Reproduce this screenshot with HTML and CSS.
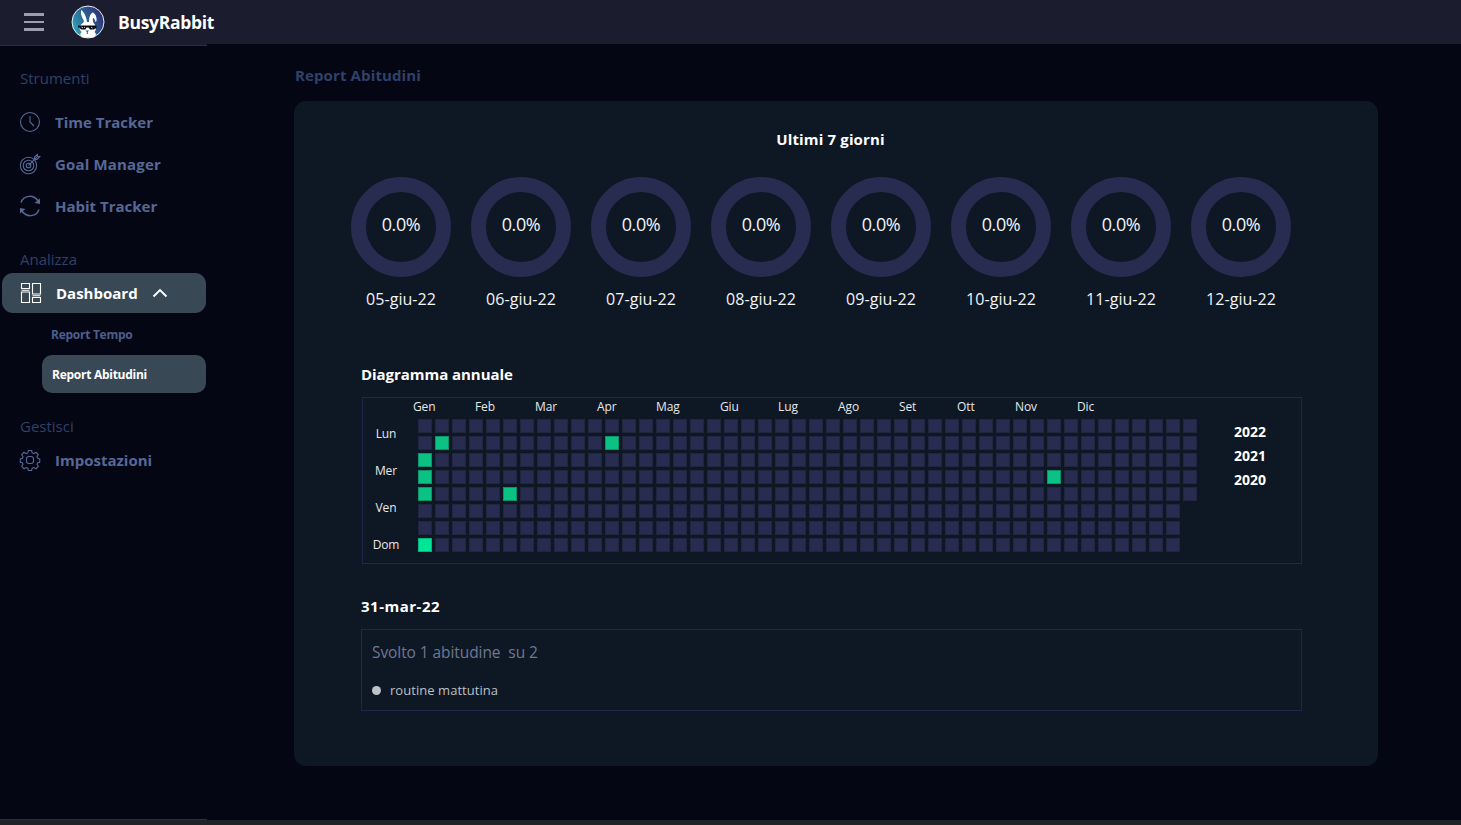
FILE: index.html
```html
<!DOCTYPE html>
<html lang="it">
<head>
<meta charset="utf-8">
<title>BusyRabbit</title>
<link rel="stylesheet" href="styles.css">
</head>
<body>
<header class="topbar">
  <div class="burger"><i></i><i></i><i></i></div>
  <svg class="logo" viewBox="0 0 34 34">
    <defs><linearGradient id="lg" x1="0" y1=".8" x2="1" y2=".3"><stop offset="0" stop-color="#2bacbf"/><stop offset=".5" stop-color="#2b6494"/><stop offset="1" stop-color="#302b74"/></linearGradient></defs>
    <circle cx="17" cy="17" r="16" fill="url(#lg)" stroke="#fff" stroke-width=".9"/>
    <path fill="#fff" d="M10 5C12 5.500 15.500 11 16 17L18 17C18 12 19.500 8 22 7.500C24.500 9 26 12 25.500 16L24.500 17C24 15 23 12.500 22 13C21.500 14.500 22 16 22.500 18C25.500 20.500 25.500 25 23.500 27C26 29 25 31.500 22 32.500L12 32.500C9 31 8.500 29 10.500 27C7.500 24 8.500 20 12 18C13 17 13 16 12.500 15C10.500 12 9.500 8 10 5Z"/>
    <path fill="#080a12" d="M7 20.500H25.500V23.500H24L23 24.500H19L17.500 22.500H15.500L14.500 24.500H10L8.500 22.500H7Z"/>
    <path stroke="#fff" stroke-width=".8" d="M10.500 22l1.500 1M13 22l1 .8M20 22l1.500 1"/>
    <path fill="#2b6494" d="M14.500 25.500h3.500l-1.200 1.500v2h-1v-2z"/>
  </svg>
  <span class="brand">BusyRabbit</span>
</header>
<div class="shell">
  <nav class="sidebar">
    <div class="group">Strumenti</div>
    <a class="item"><svg viewBox="0 0 22 22"><circle cx="11" cy="11" r="9.500"/><path d="M11 5v6l4 4"/></svg><span>Time Tracker</span></a>
    <a class="item goal"><svg viewBox="0 0 22 22"><circle cx="9.500" cy="12.500" r="8.200"/><circle cx="9.500" cy="12.500" r="5.300"/><circle cx="9.500" cy="12.500" r="2.300"/><path d="M9.500 12.500L18 4M15.500 6.500V4L18.500 1.500V3.500H20.800L18 6.500H15.500"/></svg><span>Goal Manager</span></a>
    <a class="item"><svg viewBox="0 0 22 22"><path d="M2 7.500C5 -.5 15 -.5 19.500 6.500M20 14.500C17 22.500 7 22.500 2.500 15.500" stroke-width="1.500"/><path class="solid" d="M21 3.500V9L15.500 8zM1 18.500V13L6.500 14z"/></svg><span>Habit Tracker</span></a>
    <div class="group analyze">Analizza</div>
    <a class="item open"><svg viewBox="0 0 22 22"><path d="M1.500 1.500h8v5h-8zM12.500 1.500h8v10.500h-8zM1.500 10h8v10.500h-8zM12.500 15.500h8v5h-8zM1.500 8.200h8M12.500 13.700h8"/></svg><span>Dashboard</span><svg class="chevron" viewBox="0 0 16 10"><path d="M1.500 8.500L8 2l6.500 6.500"/></svg></a>
    <a class="sub">Report Tempo</a>
    <a class="sub current">Report Abitudini</a>
    <div class="group manage">Gestisci</div>
    <a class="item settings"><svg viewBox="0 0 22 22"><rect x="7.500" y="7.500" width="7" height="7" rx="2.500"/><path d="M9.400 1.500h3.200l.6 2.400 1.600.7 2.200-1.300 2.300 2.300-1.300 2.200.7 1.600 2 .5v3.300l-2 .5-.7 1.600 1.300 2.200-2.300 2.200-2.200-1.200-1.600.7-.6 2.300H9.400l-.6-2.300-1.600-.7-2.200 1.200-2.300-2.200L4 15.300l-.7-1.600-2-.5V9.900l2-.5.7-1.600-1.300-2.200L5 3.300l2.200 1.300 1.600-.7z"/></svg><span>Impostazioni</span></a>
  </nav>
  <main class="content">
    <h1>Report Abitudini</h1>
    <section class="card">
      <h2 class="week-title">Ultimi 7 giorni</h2>
      <div class="rings">
        <div class="day"><div class="ring">0.0%</div><span>05-giu-22</span></div>
        <div class="day"><div class="ring">0.0%</div><span>06-giu-22</span></div>
        <div class="day"><div class="ring">0.0%</div><span>07-giu-22</span></div>
        <div class="day"><div class="ring">0.0%</div><span>08-giu-22</span></div>
        <div class="day"><div class="ring">0.0%</div><span>09-giu-22</span></div>
        <div class="day"><div class="ring">0.0%</div><span>10-giu-22</span></div>
        <div class="day"><div class="ring">0.0%</div><span>11-giu-22</span></div>
        <div class="day"><div class="ring">0.0%</div><span>12-giu-22</span></div>
      </div>
      <h2 class="year-title">Diagramma annuale</h2>
      <div class="year">
        <div class="weekdays"><span>Lun</span><span>Mer</span><span>Ven</span><span>Dom</span></div>
        <div class="chart">
          <div class="months"><span>Gen</span><span>Feb</span><span>Mar</span><span>Apr</span><span>Mag</span><span>Giu</span><span>Lug</span><span>Ago</span><span>Set</span><span>Ott</span><span>Nov</span><span>Dic</span></div>
          <div class="cells" id="cells"></div>
        </div>
        <div class="years"><b>2022</b><b>2021</b><b>2020</b></div>
      </div>
      <h2 class="date-title">31-mar-22</h2>
      <div class="detail">
        <p class="summary">Svolto 1 abitudine&nbsp; su 2</p>
        <p class="habit"><i></i>routine mattutina</p>
      </div>
    </section>
  </main>
</div>
<footer class="bottom"></footer>
<script src="cells.js"></script>
</body>
</html>
```
FILE: styles.css
```css
* { box-sizing: border-box; }
body { margin: 0; height: 825px; overflow: hidden; display: flex; flex-direction: column; background: #050614; color: #fff; font-family: "Open Sans", "Noto Sans", sans-serif; }
h1, h2, p { margin: 0; }
.topbar { height: 44px; flex: none; display: flex; align-items: center; padding-left: 24px; background: #1b1c2d; }
.burger { width: 20px; height: 18px; display: flex; flex-direction: column; justify-content: space-between; }
.burger i { height: 2.700px; background: #9c9eae; }
.logo { width: 34px; height: 34px; margin: 0 0 0 27px; }
.brand { margin: 0 0 0 13px; font-size: 17.500px; font-weight: 700; letter-spacing: -.3px; line-height: 24px; }
.shell { flex: 1; display: flex; min-height: 0; }
.sidebar { width: 207px; flex: none; padding-top: 23px; border-top: 1px solid #1b1c2d; border-bottom: 1px solid #292b50; box-shadow: inset 0 1px #292b50; }
.group { height: 20px; padding-left: 20px; font-size: 15px; line-height: 20px; color: #2f4165; }
.item { height: 42px; display: flex; align-items: center; padding-left: 19px; color: #566896; font-size: 15px; font-weight: 700; white-space: nowrap; }
.goal { letter-spacing: .17px; }
.item svg { width: 22px; height: 22px; margin-right: 14px; flex: none; fill: none; stroke: currentColor; stroke-width: 1.100; }
.item svg .solid { fill: currentColor; stroke: none; }
.group + .item:not(.open):not(.settings) { margin-top: 13px; }
.analyze { margin-top: 22px; }
.open { width: 204px; height: 40px; margin: 4px 0 0 2px; padding-left: 18px; border-radius: 11px; background: #384955; color: #fff; }
.item .chevron { width: 16px; height: 10px; margin: 0 0 0 14px; stroke-width: 1.900; }
.sub { display: flex; align-items: center; height: 38px; margin: 3px 1px 0 42px; padding: 0 0 1px 9px; font-size: 12px; letter-spacing: -.27px; font-weight: 700; color: #4c5f8c; }
.current { margin-top: 1px; padding: 0 0 0 10px; border-radius: 10px; background: #384955; color: #fff; }
.manage { margin-top: 23px; }
.settings { margin-top: 3px; }
.content { flex: 1; padding: 21px 0 0 87px; }
h1 { padding-left: 1px; height: 20px; font-size: 15px; letter-spacing: .12px; line-height: 20px; color: #2f4268; }
.card { width: 1084px; height: 665px; margin-top: 16px; padding: 28px 76px 0 57px; border-radius: 12px; background: #0e1724; }
h2 { font-size: 15px; letter-spacing: -.05px; line-height: 20px; height: 20px; }
.week-title { padding-left: 8px; text-align: center; letter-spacing: .15px; }
.rings { display: flex; gap: 20px; margin-top: 28px; }
.day { width: 100px; flex: none; text-align: center; font-size: 16px; letter-spacing: .05px; line-height: 20px; white-space: nowrap; color: #f2f3f5; }
.ring { height: 100px; margin-bottom: 12px; padding-bottom: 6px; border: 15px solid #282c50; border-radius: 50%; display: flex; align-items: center; justify-content: center; font-size: 18px; letter-spacing: -.4px; }
.year-title { margin: 55px 0 0 10px; }
.year { display: flex; width: 940px; height: 167px; margin: 13px 0 0 11px; border: 1px solid #23264c; }
.weekdays { width: 46px; padding-top: 26px; text-align: center; font-size: 12px; line-height: 20px; letter-spacing: -.1px; color: #e6e8ea; }
.weekdays span { display: block; height: 37px; }
.chart { padding: 1px 0 0 9px; width: 788px; }
.months { display: grid; grid-template-columns: 62px 60px 62px 59px 64px 58px 60px 61px 58px 58px 62px 30px; margin-left: -5px; height: 20px; font-size: 12px; letter-spacing: -.1px; line-height: 16px; color: #e6e8ea; }
.cells { display: grid; grid-auto-flow: column; grid-template-rows: repeat(8, 14px); grid-auto-columns: 14px; gap: 3px; }
.cells i { background: #282c50; border: 1px solid #21253f; }
.cells .done { background: #0bc183; border-color: #0b9369; }
.cells .full { background: #00e699; border-color: #05b47c; }
.years { padding: 22px 0 0 37px; font-size: 14px; line-height: 24px; }
.years b { display: block; }
.date-title { margin: 32px 0 0 10px; letter-spacing: .5px; }
.detail { width: 941px; height: 82px; margin: 13px 0 0 10px; padding: 12px 10px; border: 1px solid #23264c; }
.summary { font-size: 15.500px; letter-spacing: -.08px; line-height: 20px; color: #6e7892; }
.habit { display: flex; align-items: center; margin-top: 18px; font-size: 13px; letter-spacing: .05px; line-height: 20px; color: #b9c1c7; }
.habit i { width: 9px; height: 9px; margin-right: 9px; border-radius: 50%; background: #bcc4ca; }
.bottom { height: 5px; flex: none; background: #232229; }
```
FILE: cells.js
```js
// One square per day of the year, filled column by column.
const states = { 2: 'done', 3: 'done', 4: 'done', 7: 'full', 9: 'done', 44: 'done', 89: 'done', 299: 'done' };
const grid = document.getElementById('cells');
for (let day = 0; day < 365; day++) {
  const cell = document.createElement('i');
  if (states[day]) cell.className = states[day];
  grid.appendChild(cell);
}
```
